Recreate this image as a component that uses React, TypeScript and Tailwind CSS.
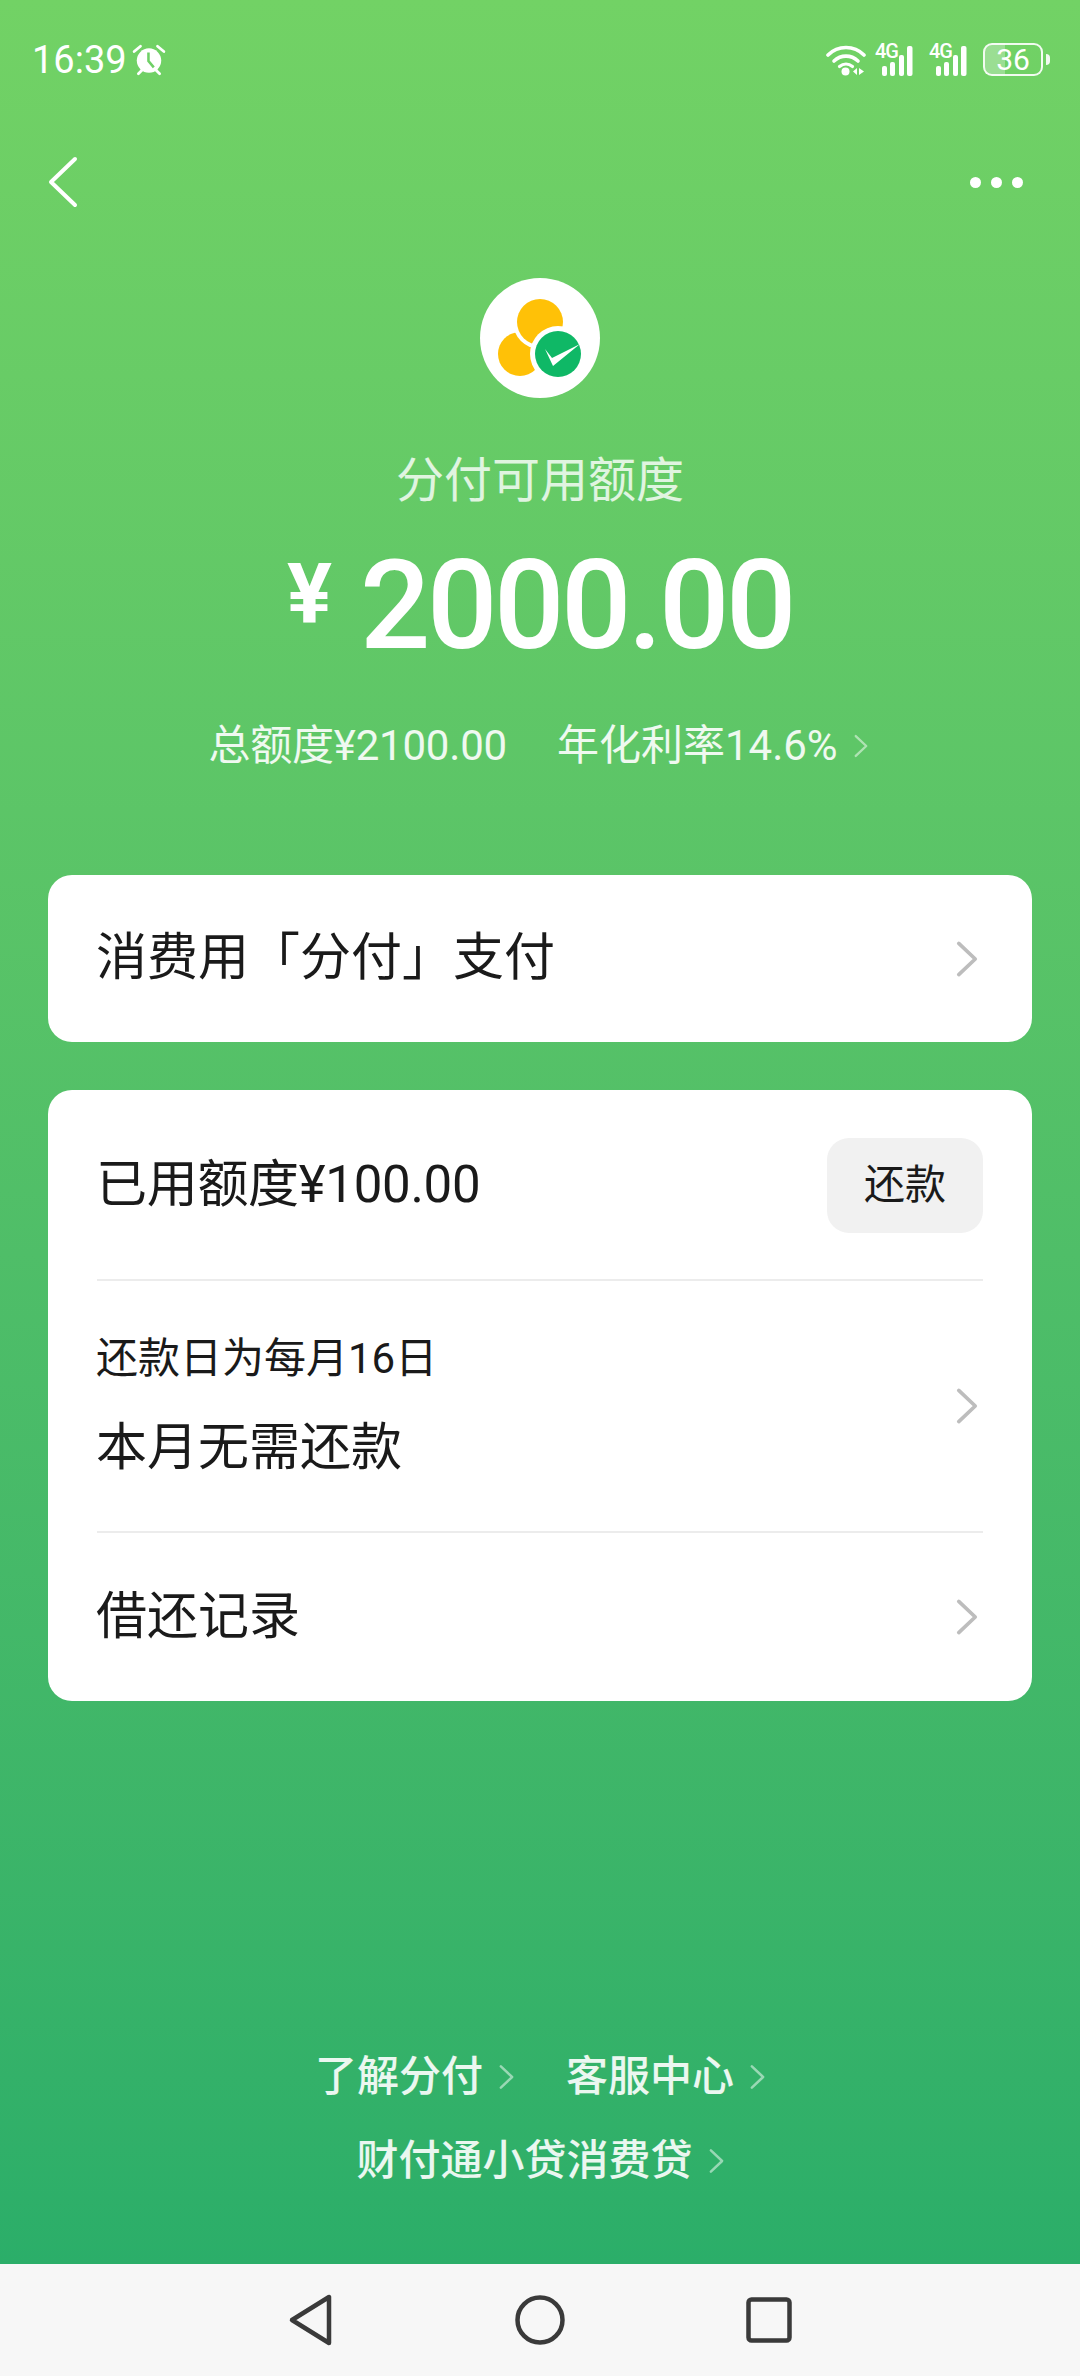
const cjk = "font-['Roboto','Noto_Sans_CJK_SC',sans-serif]";

function Chevron({ className = "" }: { className?: string }) {
  return (
    <svg viewBox="0 0 24 40" fill="none" className={className}>
      <path d="M3 3l18 17L3 37" stroke="currentColor" strokeWidth="4" strokeLinecap="round" strokeLinejoin="round" />
    </svg>
  );
}

function Alarm() {
  return (
    <svg viewBox="0 0 32 32" className="h-[34px] w-[34px]" fill="none">
      <circle cx="16" cy="16.500" r="11.500" fill="#fff" />
      <path d="M15.500 9v8l5 6" stroke="#6fd066" strokeWidth="2.400" />
      <path d="M2 8l6-5M30 8l-6-5" stroke="#fff" strokeWidth="2.600" strokeLinecap="round" />
      <path d="M6 29l4-4M26 29l-4-4" stroke="#fff" strokeWidth="2.600" strokeLinecap="round" />
    </svg>
  );
}

function Wifi() {
  return (
    <svg viewBox="0 0 40 32" className="h-[32px] w-[40px]" fill="none">
      <path d="M2 11c10-10 26-10 36 0" stroke="#fff" strokeWidth="3.600" strokeLinecap="round" />
      <path d="M8 17c7-6.500 17-6.500 24 0" stroke="#fff" strokeWidth="3.600" strokeLinecap="round" />
      <path d="M13.500 22.500c4-3.300 9-3.300 13 0" stroke="#fff" strokeWidth="3.200" strokeLinecap="round" />
      <circle cx="19.500" cy="27.500" r="4" fill="#fff" />
      <path d="M31 24v7l-4-3.500zM33 24v7l5-3.500z" fill="#fff" />
    </svg>
  );
}

function Signal() {
  return (
    <div className="relative h-[32px] w-[45px]">
      <span className="absolute left-0 top-[-3px] font-['Roboto',sans-serif] text-[20px] leading-[20px] font-medium tracking-[-1px] text-white">4G</span>
      <svg viewBox="0 0 45 32" className="h-[32px] w-[45px]">
        <rect x="7" y="22" width="5" height="10" rx="2" fill="#fff" />
        <rect x="15" y="18" width="5" height="14" rx="2" fill="#fff" />
        <rect x="24" y="11" width="5" height="21" rx="2" fill="#fff" />
        <rect x="32" y="2" width="5.500" height="30" rx="2" fill="#fff" />
      </svg>
    </div>
  );
}

function Battery() {
  return (
    <div className="flex items-center gap-[3px]">
      <div className="flex h-[33px] w-[60px] items-center justify-center overflow-hidden rounded-[9px] border-[2px] border-white/90 bg-gradient-to-r from-white/30 from-[36%] to-transparent to-[36%]">
        <span className="font-['Roboto',sans-serif] text-[30px] leading-none text-white">36</span>
      </div>
      <span className="h-[11px] w-[4px] rounded-r-full bg-white/90" />
    </div>
  );
}

function Logo() {
  return (
    <svg viewBox="0 0 120 120" className="h-[120px] w-[120px]">
      <circle cx="60" cy="60" r="60" fill="#fff" />
      <circle cx="40" cy="76" r="22" fill="#ffc107" />
      <circle cx="60" cy="44" r="27" fill="#fff" />
      <circle cx="60" cy="44" r="23" fill="#ffc107" />
      <circle cx="78" cy="76" r="28" fill="#fff" />
      <circle cx="78" cy="76" r="23" fill="#0fb866" />
      <path d="M65 71l7 9 28-14-27 22z" fill="#fff" />
    </svg>
  );
}

export default function App() {
  return (
    <div className={`flex h-[2376px] w-[1080px] flex-col overflow-hidden ${cjk}`}>
      <main className="flex flex-1 flex-col bg-gradient-to-b from-[#72d265] to-[#2bae69] px-[48px] text-white">
        {/* status bar */}
        <div className="-mx-[16px] flex h-[157px] items-start justify-between pt-[43px]">
          <div className="flex items-center gap-[5px]">
            <span className="font-['Roboto',sans-serif] text-[38px] leading-[32px]">16:39</span>
            <Alarm />
          </div>
          <div className="mr-[-2px] flex items-center gap-[9px]">
            <Wifi />
            <Signal />
            <Signal />
            <Battery />
          </div>
        </div>

        {/* title bar */}
        <div className="flex h-[50px] items-center justify-between">
          <svg viewBox="0 0 30 52" fill="none" className="h-[52px] w-[30px]">
            <path d="M27 3L3 26l24 23" stroke="#fff" strokeWidth="4" strokeLinecap="round" strokeLinejoin="round" />
          </svg>
          <div className="mr-[9px] flex gap-[10px]">
            <span className="h-[11px] w-[11px] rounded-full bg-white" />
            <span className="h-[11px] w-[11px] rounded-full bg-white" />
            <span className="h-[11px] w-[11px] rounded-full bg-white" />
          </div>
        </div>

        {/* quota */}
        <div className="mt-[71px] flex flex-col items-center">
          <Logo />
          <p className="mt-[47px] text-[48px] leading-[72px] text-white/80">分付可用额度</p>
          <div className="mt-[37px] flex h-[104px] items-center">
            <span className="mb-[22px] mr-[28px] text-[84px] leading-none font-bold">¥</span>
            <span className="text-[124px] leading-none font-medium tracking-[-3.500px]">2000.00</span>
          </div>
          <div className="mt-[58px] mr-[4px] flex items-center text-[42px] leading-[60px] text-white/90">
            <span className="tracking-[-0.200px]">总额度¥2100.00</span>
            <span className="ml-[50px]">年化利率14.6%</span>
            <Chevron className="ml-[16px] h-[24px] w-[14px] text-white/50" />
          </div>
        </div>

        {/* pay card */}
        <div className="mt-[99px] flex h-[167px] items-center justify-between rounded-[24px] bg-white pl-[48px] pr-[54px] text-[#1a1a1a]">
          <span className="text-[51px]">消费用「分付」支付</span>
          <Chevron className="h-[38px] w-[22px] text-[#bdbdbd]" />
        </div>

        {/* repayment card */}
        <div className="mt-[48px] flex h-[611px] flex-col rounded-[24px] bg-white px-[49px] text-[#1a1a1a]">
          <div className="flex h-[191px] items-center justify-between border-b-2 border-[#ececec] pt-[2px]">
            <span className="-ml-px text-[51px] tracking-[-0.300px]">已用额度¥100.00</span>
            <button className="flex h-[95px] w-[156px] items-center justify-center rounded-[22px] bg-[#f1f1f1] text-[41px]">还款</button>
          </div>
          <div className="flex h-[252px] items-center justify-between border-b-2 border-[#ececec] pr-[5px]">
            <div className="-ml-px flex flex-col">
              <span className="text-[42px] leading-[60px]">还款日为每月16日</span>
              <span className="mt-[24px] text-[51px] leading-[70px]">本月无需还款</span>
            </div>
            <Chevron className="h-[38px] w-[22px] text-[#bdbdbd]" />
          </div>
          <div className="flex flex-1 items-center justify-between pr-[5px]">
            <span className="-ml-px text-[51px]">借还记录</span>
            <Chevron className="h-[38px] w-[22px] text-[#bdbdbd]" />
          </div>
        </div>

        {/* footer links */}
        <div className="mt-auto mb-[72px] flex flex-col items-center gap-[22px] text-[42px] leading-[62px] font-medium text-white/90">
          <div className="flex items-center">
            <span>了解分付</span>
            <Chevron className="ml-[16px] h-[26px] w-[15px] text-white/50" />
            <span className="ml-[52px]">客服中心</span>
            <Chevron className="ml-[16px] h-[26px] w-[15px] text-white/50" />
          </div>
          <div className="flex items-center">
            <span>财付通小贷消费贷</span>
            <Chevron className="ml-[16px] h-[26px] w-[15px] text-white/50" />
          </div>
        </div>
      </main>

      {/* android nav bar */}
      <nav className="relative flex h-[112px] items-center justify-center gap-[181px] bg-[#f7f7f7]">
        <svg viewBox="0 0 46 54" fill="none" className="h-[54px] w-[46px]">
          <path d="M41 4v46L4 27z" stroke="#3a3a3a" strokeWidth="4.500" strokeLinejoin="round" />
        </svg>
        <svg viewBox="0 0 50 50" fill="none" className="h-[50px] w-[50px]">
          <circle cx="25" cy="25" r="22.500" stroke="#3a3a3a" strokeWidth="4.500" />
        </svg>
        <svg viewBox="0 0 46 46" fill="none" className="h-[46px] w-[46px]">
          <rect x="2.500" y="2.500" width="41" height="41" rx="3" stroke="#3a3a3a" strokeWidth="4.500" />
        </svg>
      </nav>
    </div>
  );
}
